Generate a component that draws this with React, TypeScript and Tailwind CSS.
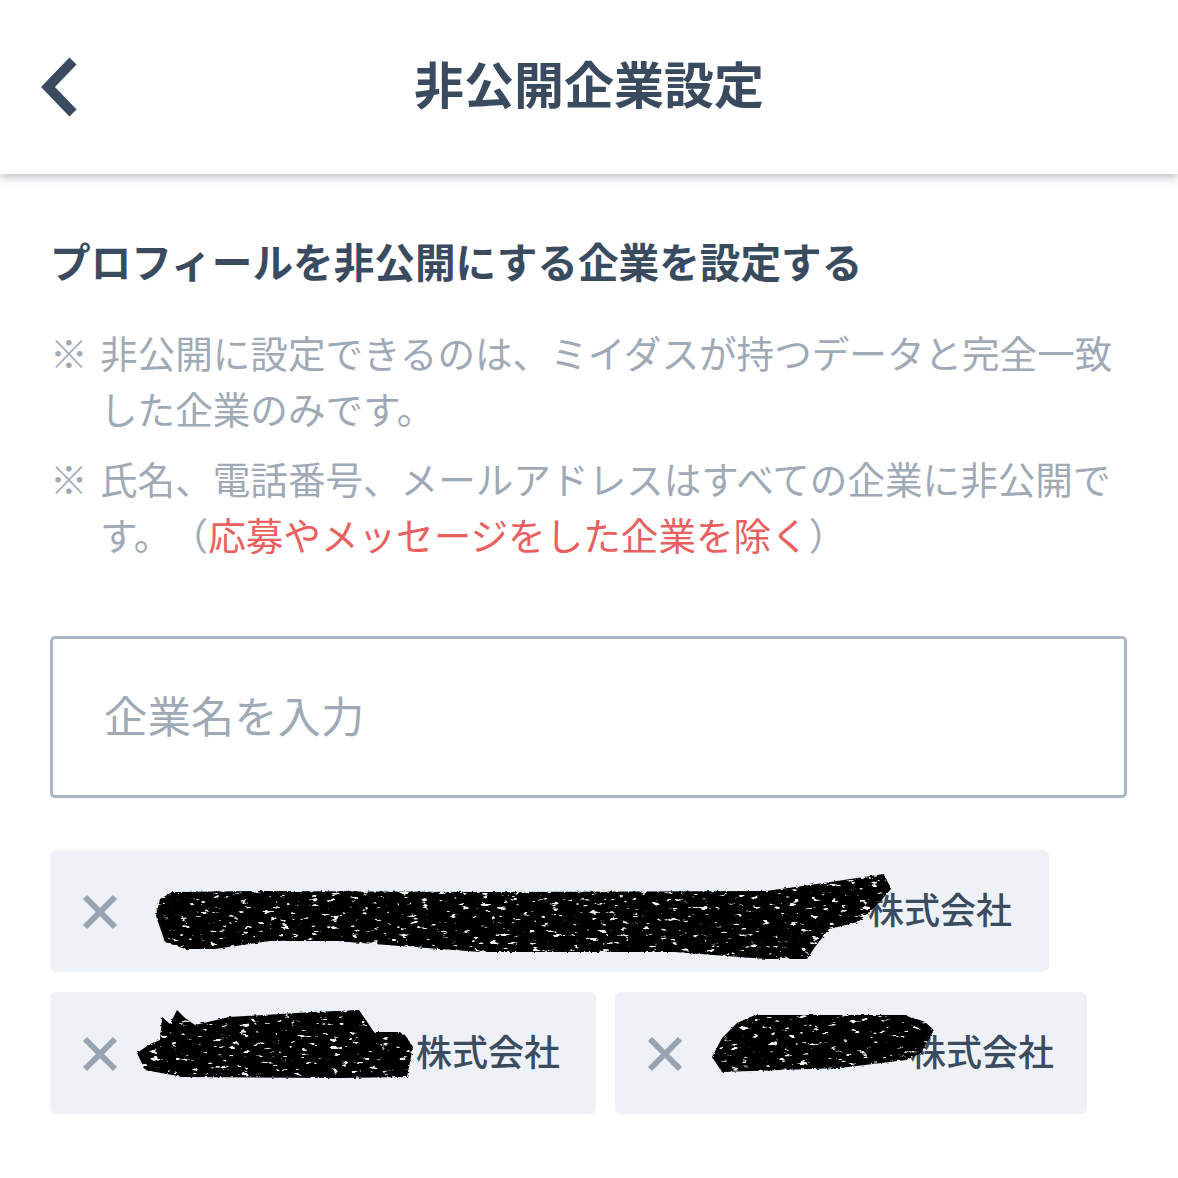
/* ---------- redaction brush strokes, in page coordinates ---------- */

const strokes = {
  long: "M156 917 L160 900 L172 893 L260 892 L480 893 L766 892 L810 886 L884 875 L891 890 L878 905 L858 923 L829 930 L815 948 L807 960 L766 960 L674 953 L480 953 L400 947 L335 942 L270 942 L215 950 L185 950 L165 943 Z",
  mid: "M137 1053 L150 1044 L160 1040 L162 1017 L170 1024 L177 1010 L185 1018 L195 1025 L229 1017 L313 1012 L359 1010 L374 1032 L403 1032 L413 1047 L407 1077 L340 1078 L183 1077 L145 1070 Z",
  short:
    "M712 1057 L722 1038 L737 1023 L755 1015 L906 1015 L925 1022 L934 1030 L921 1053 L906 1060 L840 1068 L722 1072 Z",
};

function Scribble({ viewBox, d, id }: { viewBox: string; d: string; id: string }) {
  return (
    <svg
      className="absolute inset-0 w-full h-full overflow-visible pointer-events-none"
      viewBox={viewBox}
    >
      <defs>
        <filter id={id} x="-5%" y="-20%" width="110%" height="140%">
          <feTurbulence type="fractalNoise" baseFrequency="0.3 0.5" numOctaves="2" seed="4" result="edge" />
          <feDisplacementMap in="SourceGraphic" in2="edge" scale="3" result="rough" />
          <feTurbulence type="fractalNoise" baseFrequency="0.1 0.26" numOctaves="4" seed="9" />
          <feColorMatrix values="0 0 0 0 0  0 0 0 0 0  0 0 0 0 0  0 0 0 -12 8.9" result="holes" />
          <feComposite in="rough" in2="holes" operator="in" />
        </filter>
      </defs>
      <path d={d} fill="#000" filter={`url(#${id})`} />
    </svg>
  );
}

function CompanyTag({
  name,
  blankWidth,
  className,
  viewBox,
  d,
  id,
}: {
  name: string;
  blankWidth: string;
  className: string;
  viewBox: string;
  d: string;
  id: string;
}) {
  return (
    <div className={`relative flex items-center h-[122px] rounded-[6px] bg-[#eef1f6] pl-[32px] ${className}`}>
      <svg className="w-[36px] h-[36px] shrink-0 mr-[37px] mt-[2px]" viewBox="0 0 36 36">
        <path d="M3 3 L33 33 M33 3 L3 33" stroke="#98a4b2" strokeWidth="6" fill="none" />
      </svg>
      <span className={`${blankWidth} mb-[6px] overflow-hidden text-[36px] font-medium text-[#3c4c5f]`}>{name.charAt(0)}</span>
      <span className="mb-[6px] text-[36px] font-medium text-[#3c4c5f] whitespace-nowrap">株式会社</span>
      <Scribble viewBox={viewBox} d={d} id={id} />
    </div>
  );
}

export default function App() {
  return (
    <div
      className="w-[1178px] h-[1178px] overflow-hidden bg-white"
      style={{ fontFamily: '"Noto Sans CJK JP", "Noto Sans", sans-serif' }}
    >
      {/* HEADER */}
      <header className="relative flex items-center justify-center h-[174px] pb-[10px] bg-white shadow-[0_3px_9px_rgba(60,70,85,0.36)]">
        <svg className="absolute left-[36px] top-[54px] w-[46px] h-[66px]" viewBox="0 0 46 66">
          <path d="M37 7 L12 33 L37 59" stroke="#3a4b5f" strokeWidth="10" fill="none" />
        </svg>
        <h1 className="text-[50px] leading-none font-bold text-[#3a4b5f]">非公開企業設定</h1>
      </header>

      <main className="pl-[50px] pr-[51px]">
        <h2 className="mt-[57px] text-[40.65px] leading-[60px] font-bold text-[#3a4b5f] whitespace-nowrap">
          プロフィールを非公開にする企業を設定する
        </h2>

        {/* NOTES */}
        <div className="mt-[33px] flex flex-col gap-[14px] text-[37.6px] leading-[56px] text-[#a0aab6] whitespace-nowrap">
          <div className="flex">
            <span className="w-[50px] shrink-0">※</span>
            <p>
              非公開に設定できるのは、ミイダスが持つデータと完全一致
              <br />
              した企業のみです。
            </p>
          </div>
          <div className="flex">
            <span className="w-[50px] shrink-0">※</span>
            <p>
              氏名、電話番号、メールアドレスはすべての企業に非公開で
              <br />
              す。<span className="ml-[18px]">（</span>
              <span className="text-[#e8605f]">応募やメッセージをした企業を除く</span>）
            </p>
          </div>
        </div>

        {/* INPUT */}
        <input
          className="mt-[74px] block w-[1077px] h-[162px] rounded-[5px] border-[3px] border-[#abb6c5] bg-white pl-[51px] pb-[6px] text-[43.4px] text-[#3a4b5f] placeholder:text-[#a0aab6] outline-none"
          placeholder="企業名を入力"
        />

        {/* SELECTED COMPANIES */}
        <div className="mt-[52px] flex flex-wrap gap-x-[19px] gap-y-[20px] w-[1078px]">
          <CompanyTag
            name="一"
            blankWidth="w-[713px]"
            className="w-[999px]"
            viewBox="50 851 999 122"
            d={strokes.long}
            id="scribble-long"
          />
          <CompanyTag
            name="一"
            blankWidth="w-[261px]"
            className="w-[546px]"
            viewBox="50 992 546 122"
            d={strokes.mid}
            id="scribble-mid"
          />
          <CompanyTag
            name="日"
            blankWidth="w-[190px]"
            className="w-[472px]"
            viewBox="615 992 472 122"
            d={strokes.short}
            id="scribble-short"
          />
        </div>
      </main>
    </div>
  );
}
